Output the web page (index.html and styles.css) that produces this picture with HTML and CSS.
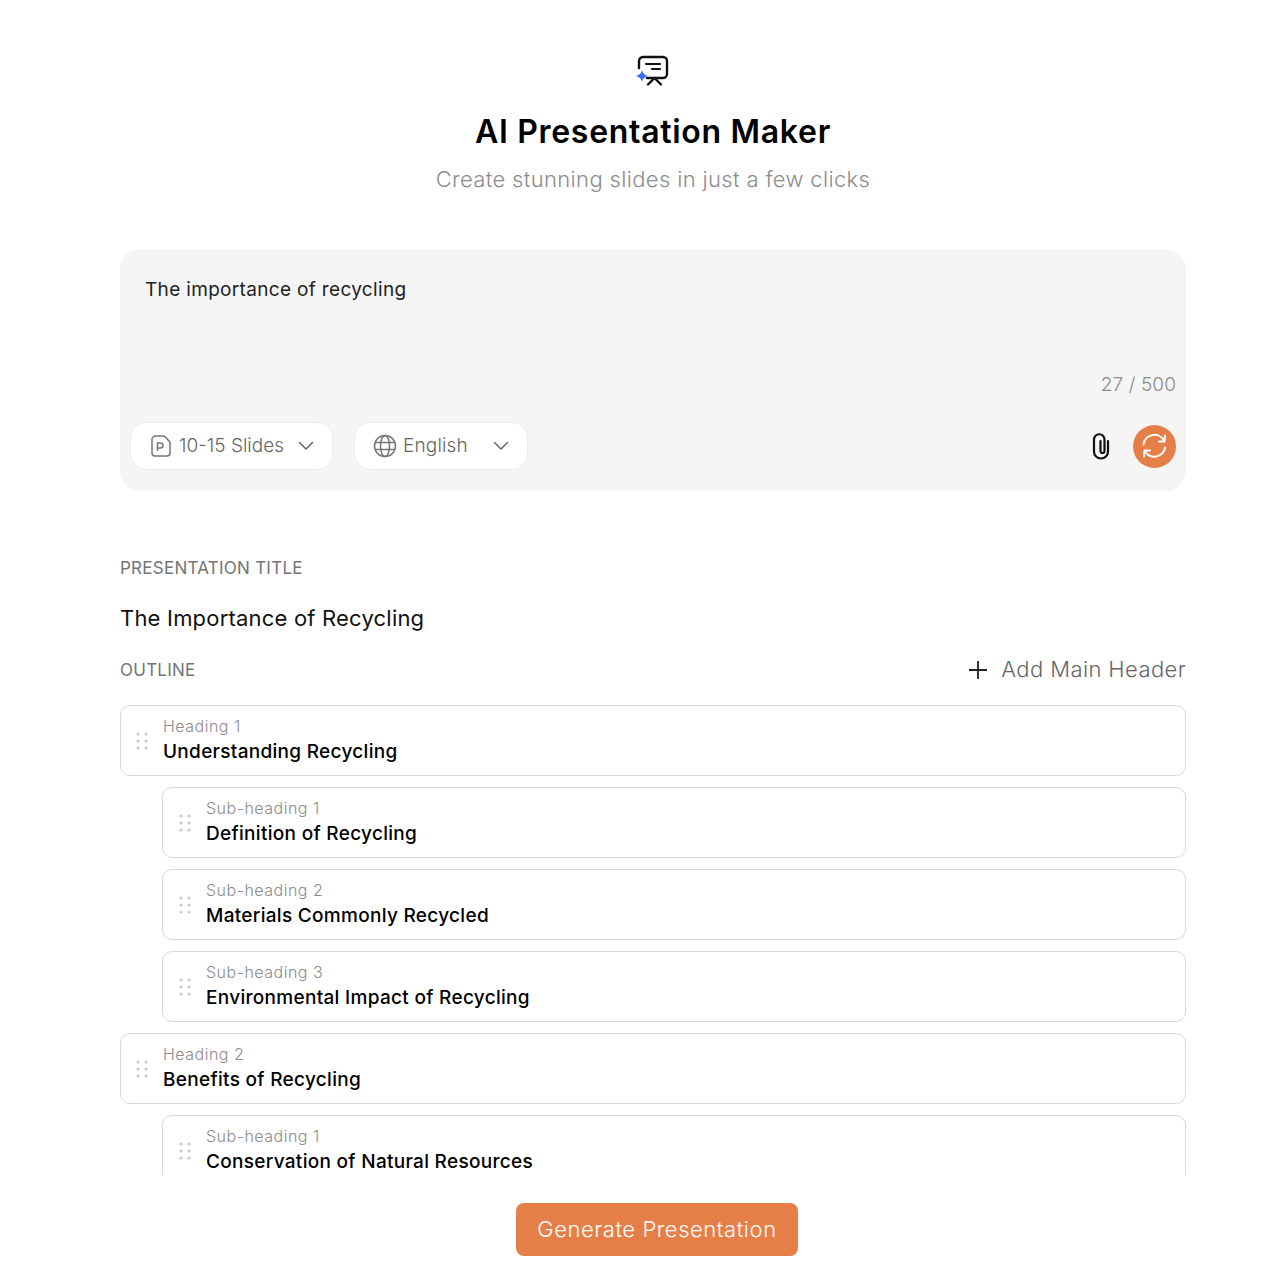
FILE: index.html
```html
<!DOCTYPE html>
<html lang="en">

<head>
  <meta charset="UTF-8">
  <meta name="viewport" content="width=device-width, initial-scale=1.0">
  <title>AI Presentation Maker</title>
  <link rel="stylesheet" href="styles.css">
</head>

<body>
  <header class="hero">
    <svg class="hero-icon" width="34" height="32" viewBox="0 0 34 32" fill="none">
      <path d="M3 13V6a4 4 0 0 1 4-4h20a4 4 0 0 1 4 4v13a4 4 0 0 1-4 4H11" stroke="#111" stroke-width="2.400" stroke-linecap="round"/>
      <path d="M10 9h14M16 14h8" stroke="#111" stroke-width="2.200" stroke-linecap="round"/>
      <path d="M12 29.500l6.500-6.500 6.500 6.500" stroke="#111" stroke-width="2.400" stroke-linecap="round" stroke-linejoin="round"/>
      <path d="M6 15c.8 3.200 1.800 4.300 6 6-4.200 1.700-5.200 2.800-6 6-.8-3.200-1.800-4.300-6-6 4.200-1.700 5.200-2.800 6-6z" fill="#3f6ff5"/>
    </svg>
    <h1 class="hero-title">AI Presentation Maker</h1>
    <p class="hero-sub">Create stunning slides in just a few clicks</p>
  </header>

  <section class="prompt">
    <div class="prompt-text">The importance of recycling</div>
    <div class="prompt-count">27 / 500</div>
    <div class="prompt-bar">
      <button class="select select-slides" type="button">
        <svg width="22" height="24" viewBox="0 0 22 24" fill="none" stroke="#757575" stroke-width="1.500">
          <path d="M2 5.500A3.500 3.500 0 0 1 5.500 2H13c1 0 1.800.4 2.500 1.100l3.400 3.800c.6.6 1.100 1.400 1.100 2.300V19a3 3 0 0 1-3 3H5a3 3 0 0 1-3-3z" stroke-linejoin="round"/>
          <path d="M7.500 17V9h3a2.500 2.500 0 0 1 0 5h-3"/>
        </svg>
        <span>10-15 Slides</span>
        <svg class="chevron" width="16" height="10" viewBox="0 0 16 10" fill="none"><path d="M1.500 1.500L8 8l6.500-6.500" stroke="#666" stroke-width="1.500" stroke-linecap="round" stroke-linejoin="round"/></svg>
      </button>
      <button class="select select-lang" type="button">
        <svg width="24" height="24" viewBox="0 0 24 24" fill="none" stroke="#757575" stroke-width="1.500">
          <circle cx="12" cy="12" r="10.500"/>
          <ellipse cx="12" cy="12" rx="4.500" ry="10.500"/>
          <path d="M2 8.500h20M2 15.500h20"/>
        </svg>
        <span>English</span>
        <svg class="chevron" width="16" height="10" viewBox="0 0 16 10" fill="none"><path d="M1.500 1.500L8 8l6.500-6.500" stroke="#666" stroke-width="1.500" stroke-linecap="round" stroke-linejoin="round"/></svg>
      </button>
      <svg class="clip" width="20" height="28" viewBox="0 0 20 28" fill="none">
        <path d="M17 9v10.500a7 7 0 0 1-14 0V7.500a5.250 5.250 0 0 1 10.500 0V19a2 2 0 0 1-4 0V9" stroke="#111" stroke-width="2.200" stroke-linecap="round"/>
      </svg>
      <button class="refresh" type="button">
        <svg width="30" height="30" viewBox="0 0 30 30" fill="none" stroke="#fff" stroke-width="2" stroke-linecap="round" stroke-linejoin="round">
          <path d="M3.500 13.500A11 11 0 0 1 24.300 10"/>
          <path d="M25 4.500L24.500 10.500H19"/>
          <path d="M25.100 16.500A11 11 0 0 1 4.700 20"/>
          <path d="M4 25.500L4.500 19.500H10"/>
        </svg>
      </button>
    </div>
  </section>

  <section class="details">
    <div class="label">PRESENTATION TITLE</div>
    <div class="deck-title">The Importance of Recycling</div>
    <div class="outline-head">
      <div class="label">OUTLINE</div>
      <div class="add-header">
        <svg width="20" height="20" viewBox="0 0 20 20" fill="none"><path d="M10 1v18M1 10h18" stroke="#222" stroke-width="1.800"/></svg>
        <span>Add Main Header</span>
      </div>
    </div>

    <div class="outline">
      <div class="row">
        <svg class="grip" width="12" height="18" viewBox="0 0 12 18"><g fill="#c9c9c9"><circle cx="2" cy="2" r="1.600"/><circle cx="10" cy="2" r="1.600"/><circle cx="2" cy="9" r="1.600"/><circle cx="10" cy="9" r="1.600"/><circle cx="2" cy="16" r="1.600"/><circle cx="10" cy="16" r="1.600"/></g></svg>
        <div class="row-text"><div class="row-label">Heading 1</div><div class="row-name">Understanding Recycling</div></div>
      </div>
      <div class="row row-sub">
        <svg class="grip" width="12" height="18" viewBox="0 0 12 18"><g fill="#c9c9c9"><circle cx="2" cy="2" r="1.600"/><circle cx="10" cy="2" r="1.600"/><circle cx="2" cy="9" r="1.600"/><circle cx="10" cy="9" r="1.600"/><circle cx="2" cy="16" r="1.600"/><circle cx="10" cy="16" r="1.600"/></g></svg>
        <div class="row-text"><div class="row-label">Sub-heading 1</div><div class="row-name">Definition of Recycling</div></div>
      </div>
      <div class="row row-sub">
        <svg class="grip" width="12" height="18" viewBox="0 0 12 18"><g fill="#c9c9c9"><circle cx="2" cy="2" r="1.600"/><circle cx="10" cy="2" r="1.600"/><circle cx="2" cy="9" r="1.600"/><circle cx="10" cy="9" r="1.600"/><circle cx="2" cy="16" r="1.600"/><circle cx="10" cy="16" r="1.600"/></g></svg>
        <div class="row-text"><div class="row-label">Sub-heading 2</div><div class="row-name">Materials Commonly Recycled</div></div>
      </div>
      <div class="row row-sub">
        <svg class="grip" width="12" height="18" viewBox="0 0 12 18"><g fill="#c9c9c9"><circle cx="2" cy="2" r="1.600"/><circle cx="10" cy="2" r="1.600"/><circle cx="2" cy="9" r="1.600"/><circle cx="10" cy="9" r="1.600"/><circle cx="2" cy="16" r="1.600"/><circle cx="10" cy="16" r="1.600"/></g></svg>
        <div class="row-text"><div class="row-label">Sub-heading 3</div><div class="row-name">Environmental Impact of Recycling</div></div>
      </div>
      <div class="row">
        <svg class="grip" width="12" height="18" viewBox="0 0 12 18"><g fill="#c9c9c9"><circle cx="2" cy="2" r="1.600"/><circle cx="10" cy="2" r="1.600"/><circle cx="2" cy="9" r="1.600"/><circle cx="10" cy="9" r="1.600"/><circle cx="2" cy="16" r="1.600"/><circle cx="10" cy="16" r="1.600"/></g></svg>
        <div class="row-text"><div class="row-label">Heading 2</div><div class="row-name">Benefits of Recycling</div></div>
      </div>
      <div class="row row-sub">
        <svg class="grip" width="12" height="18" viewBox="0 0 12 18"><g fill="#c9c9c9"><circle cx="2" cy="2" r="1.600"/><circle cx="10" cy="2" r="1.600"/><circle cx="2" cy="9" r="1.600"/><circle cx="10" cy="9" r="1.600"/><circle cx="2" cy="16" r="1.600"/><circle cx="10" cy="16" r="1.600"/></g></svg>
        <div class="row-text"><div class="row-label">Sub-heading 1</div><div class="row-name">Conservation of Natural Resources</div></div>
      </div>
    </div>
  </section>

  <div class="footer">
    <button class="generate" type="button">Generate Presentation</button>
  </div>
</body>

</html>
```

FILE: styles.css
```css
* {
  box-sizing: border-box;
}

body {
  margin: 0;
  padding: 55px 88px 24px 120px;
  background-color: #ffffff;
  color: #111111;
  font-family: "Inter", "Liberation Sans", sans-serif;
}

button {
  font-family: inherit;
  border: none;
}

.hero {
  display: flex;
  flex-direction: column;
  align-items: center;
  height: 194px;
}

.hero-icon {
  display: block;
}

.hero-title {
  margin: 25px 0 0;
  font-size: 32px;
  line-height: 40px;
  font-weight: 600;
  letter-spacing: 0.7px;
  color: #000000;
}

.hero-sub {
  margin: 12px 0 0;
  font-size: 22px;
  line-height: 30px;
  font-weight: 300;
  letter-spacing: 0.35px;
  color: #8c8c8c;
}

.prompt {
  height: 242px;
  padding: 28px 10px 0;
  background-color: #f5f5f5;
  border-radius: 20px;
}

.prompt-text {
  height: 93px;
  padding-left: 15px;
  font-size: 19px;
  line-height: 26px;
  letter-spacing: 0.33px;
  color: #222222;
}

.prompt-count {
  height: 28px;
  font-size: 19px;
  line-height: 30px;
  letter-spacing: 0.1px;
  text-align: right;
  color: #8c8c8c;
  font-weight: 300;
}

.prompt-bar {
  display: flex;
  align-items: center;
  margin-top: 24px;
}

.select {
  display: flex;
  align-items: center;
  height: 48px;
  padding-right: 0;
  background-color: #ffffff;
  border: 1px solid #eeeeee;
  border-radius: 16px;
  font-size: 19px;
  font-weight: 300;
  color: #666666;
}

.select span {
  margin-top: -2px;
}

.select-slides {
  width: 203px;
  padding-left: 19px;
  gap: 7px;
}

.select-lang {
  width: 174px;
  margin-left: 21px;
  padding-left: 18px;
  gap: 6px;
  letter-spacing: 0.15px;
}

.chevron {
  margin-left: auto;
  margin-right: 18px;
}

.clip {
  margin-left: auto;
  margin-right: 22px;
}

.refresh {
  display: flex;
  align-items: center;
  justify-content: center;
  width: 43px;
  height: 43px;
  padding: 0;
  border-radius: 50%;
  background-color: #e67f47;
}

.details {
  padding-top: 65px;
}

.label {
  font-size: 17px;
  line-height: 24px;
  letter-spacing: 0.25px;
  color: #757575;
}

.deck-title {
  margin-top: 23px;
  font-size: 22px;
  line-height: 30px;
  letter-spacing: 0.2px;
  color: #111111;
}

.outline-head {
  display: flex;
  justify-content: space-between;
  align-items: center;
  height: 30px;
  margin-top: 22px;
}

.add-header {
  display: flex;
  align-items: center;
  gap: 13px;
  font-size: 22px;
  line-height: 30px;
  font-weight: 300;
  letter-spacing: 0.4px;
  color: #666666;
}

.add-header span {
  margin-top: -3px;
}

.outline {
  height: 470px;
  margin-top: 20px;
  overflow: hidden;
}

.row {
  display: flex;
  align-items: center;
  height: 71px;
  margin-bottom: 11px;
  padding-left: 15px;
  gap: 15px;
  background-color: #ffffff;
  border: 1px solid #d9d9d9;
  border-radius: 10px;
}

.row-sub {
  margin-left: 42px;
  padding-left: 16px;
}

.row-text {
  padding-bottom: 3px;
}

.row-label {
  font-size: 16px;
  line-height: 24px;
  font-weight: 300;
  letter-spacing: 0.5px;
  color: #8c8c8c;
}

.row-name {
  margin-top: 1px;
  font-size: 19px;
  line-height: 26px;
  font-weight: 500;
  letter-spacing: 0.3px;
  color: #000000;
}

.footer {
  display: flex;
  justify-content: center;
  margin-top: 28px;
  padding-left: 8px;
}

.generate {
  width: 282px;
  height: 53px;
  padding: 0 0 2px;
  background-color: #e67f47;
  border-radius: 8px;
  font-size: 22px;
  font-weight: 300;
  letter-spacing: 0.55px;
  color: #ffffff;
}
```
